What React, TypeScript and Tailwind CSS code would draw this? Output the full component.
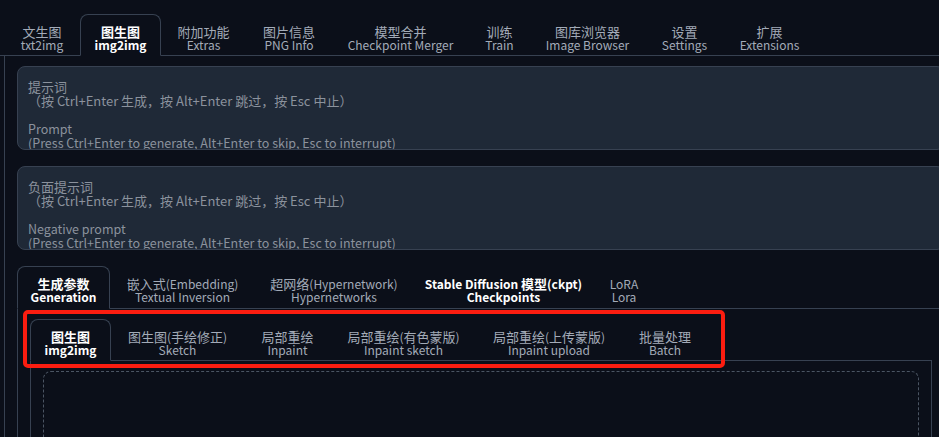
import React from "react";

type Tab = { zh: string; en: string; w: string; active?: boolean; bold?: boolean };

const topTabs: Tab[] = [
  { zh: "文生图", en: "txt2img", w: "w-[76px]" },
  { zh: "图生图", en: "img2img", w: "w-[81px]", active: true },
  { zh: "附加功能", en: "Extras", w: "w-[85px]" },
  { zh: "图片信息", en: "PNG Info", w: "w-[86px]" },
  { zh: "模型合并", en: "Checkpoint Merger", w: "w-[137px]" },
  { zh: "训练", en: "Train", w: "w-[61px]" },
  { zh: "图库浏览器", en: "Image Browser", w: "w-[115px]" },
  { zh: "设置", en: "Settings", w: "w-[79px]" },
  { zh: "扩展", en: "Extensions", w: "w-[91px]" },
];

const genTabs: Tab[] = [
  { zh: "生成参数", en: "Generation", w: "w-[93px]", active: true },
  { zh: "嵌入式(Embedding)", en: "Textual Inversion", w: "w-[145px]" },
  { zh: "超网络(Hypernetwork)", en: "Hypernetworks", w: "w-[158px]" },
  { zh: "Stable Diffusion 模型(ckpt)", en: "Checkpoints", w: "w-[181px]", bold: true },
  { zh: "LoRA", en: "Lora", w: "w-[60px]" },
];

const subTabs: Tab[] = [
  { zh: "图生图", en: "img2img", w: "w-[81px]", active: true },
  { zh: "图生图(手绘修正)", en: "Sketch", w: "w-[133px]" },
  { zh: "局部重绘", en: "Inpaint", w: "w-[87px]" },
  { zh: "局部重绘(有色蒙版)", en: "Inpaint sketch", w: "w-[145px]" },
  { zh: "局部重绘(上传蒙版)", en: "Inpaint upload", w: "w-[146px]" },
  { zh: "批量处理", en: "Batch", w: "w-[86px]" },
];

// latin runs are a touch smaller than the CJK glyphs in the original
function Mixed({ text }: { text: string }) {
  const parts = text.split(/([\u3000-\u9fff\uff00-\uffef]+)/).filter(Boolean);
  return (
    <span>
      {parts.map((p, i) =>
        /[\u3000-\u9fff\uff00-\uffef]/.test(p) ? (
          <span key={i}>{p}</span>
        ) : (
          <span key={i} className="text-[12px]">
            {p}
          </span>
        )
      )}
    </span>
  );
}

function TabButton({ tab, h }: { tab: Tab; h: string }) {
  const on = tab.active;
  return (
    <div
      className={
        `${tab.w} ${h} -mb-px shrink-0 flex flex-col items-center pt-[10px] text-[13px] leading-[13px] whitespace-nowrap ` +
        (on
          ? "border border-[#374151] border-b-[#0b0f19] rounded-t-lg bg-[#0b0f19] text-white font-semibold"
          : tab.bold
          ? "border border-transparent text-white font-semibold"
          : "border border-transparent text-[#a3abb8]")
      }
    >
      <Mixed text={tab.zh} />
      <span className="text-[12px]">{tab.en}</span>
    </div>
  );
}

function PromptBox({ zh, en }: { zh: string; en: string }) {
  return (
    <div className="h-[84px] overflow-hidden rounded-lg border border-[#374151] bg-[#1f2937] px-[10px] pt-[13px] text-[13px] leading-[14px] text-[#8b929d] whitespace-pre">
      <div>{zh}</div>
      <div>（按 Ctrl+Enter 生成，按 Alt+Enter 跳过，按 Esc 中止）</div>
      <div className="h-[14px]" />
      <div className="text-[12.5px]">{en}</div>
      <div className="text-[12.5px]">(Press Ctrl+Enter to generate, Alt+Enter to skip, Esc to interrupt)</div>
    </div>
  );
}

export default function App() {
  return (
    <div className="relative w-[939px] h-[437px] overflow-hidden bg-[#0b0f19] font-['Noto_Sans_CJK_SC',sans-serif]">
      <div className="w-[961px]">
        {/* top tabs */}
        <div className="flex items-end pl-1 pt-[14px] border-b border-[#374151]">
          {topTabs.map((t) => (
            <TabButton key={t.en} tab={t} h="h-[42px]" />
          ))}
        </div>
        <div className="ml-1 w-[954px] border-x border-[#374151] px-[12px] pt-[10px] h-[400px]">
          <PromptBox zh="提示词" en="Prompt" />
          <div className="mt-[16px]">
            <PromptBox zh="负面提示词" en="Negative prompt" />
          </div>

          {/* generation tabs */}
          <div className="mt-[16px] flex items-end border-b border-[#374151]">
            {genTabs.map((t) => (
              <TabButton key={t.en} tab={t} h="h-[43px]" />
            ))}
          </div>
          <div className="border-x border-[#374151] px-[12px] pt-[10px] h-[200px]">
            {/* img2img sub tabs */}
            <div className="flex items-end border-b border-[#374151]">
              {subTabs.map((t) => (
                <TabButton key={t.en} tab={t} h="h-[42px]" />
              ))}
            </div>
            <div className="border-x border-[#374151] px-[12px] pt-[10px] h-[120px]">
              <div className="h-[200px] rounded-lg border border-dashed border-[#4b5563]" />
            </div>
          </div>
        </div>
      </div>

      {/* red highlight annotation */}
      <div className="absolute left-[23px] top-[310px] w-[702px] h-[58px] rounded-[5px] border-[4px] border-[#fb1d10]" />
    </div>
  );
}
